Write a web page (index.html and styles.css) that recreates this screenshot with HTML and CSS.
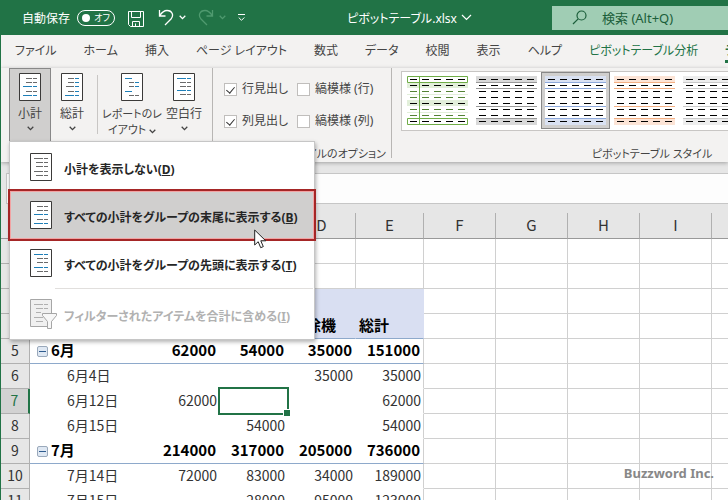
FILE: index.html
```html
<!DOCTYPE html>
<html lang="ja">
<head>
    <meta charset="UTF-8">
    <meta name="viewport" content="width=device-width, initial-scale=1.0">
    <title>ピボットテーブル.xlsx</title>
    <link rel="stylesheet" href="styles.css">
</head>
<body>

<!-- shared icons -->
<svg class="defs" width="0" height="0" aria-hidden="true">
    <symbol id="caret" viewBox="0 0 7 5"><path d="M.7.8 3.5 3.6 6.3.8" fill="none" stroke="currentColor" stroke-width="1.3"/></symbol>
    <symbol id="page" viewBox="0 0 22 28"><path d="M.5.5h21v27H.5z" fill="#fff" stroke="#3b3a39"/></symbol>
    <symbol id="dashes" viewBox="0 0 61 49">
        <path d="M3 3.5h58M3 9.5h58M3 15.5h58M3 21.5h58M3 27.5h58M3 33.5h58M3 39.5h58M3 45.5h58" fill="none" stroke="currentColor" stroke-dasharray="7 5"/>
    </symbol>
    <symbol id="subtotal-bottom" viewBox="0 0 22 28">
        <use href="#page"/>
        <path d="M7 5.5h6M14 5.5h4M7 9.5h6M14 9.5h4M7 18.5h6M14 18.5h4" stroke="#6a6a6a"/>
        <path d="M4 13.5h9M14 13.5h4M4 22.5h9M14 22.5h4" stroke="#1e7fb8"/>
    </symbol>
</svg>

<div class="window">
    <header class="titlebar">
        <div class="quick-access">
            <label for="autosave">自動保存</label>
            <span class="switch">
                <input type="checkbox" id="autosave" role="switch">
                <span class="switch-text">オフ</span>
            </span>
            <button class="icon-button save" aria-label="上書き保存">
                <svg width="16" height="16" viewBox="0 0 16 16" fill="none" stroke="currentColor"><path d="M.5.5h15v15H2.5l-2-2zM3.5.5v6h9v-6M4.5 15.5v-5h7v5M7.5 15.5v-3"/></svg>
            </button>
            <button class="icon-button" aria-label="元に戻す">
                <svg width="16" height="17" viewBox="0 0 16 17" fill="none" stroke="currentColor" stroke-width="1.3"><path d="M1.5 1v6h6M1.8 6.7C4 3 6 1.5 9 1.5c5.500 0 7 5 4 8.500L7 16"/></svg>
                <svg class="caret" width="7" height="5"><use href="#caret"/></svg>
            </button>
            <button class="icon-button dim" aria-label="やり直し">
                <svg width="16" height="17" viewBox="0 0 16 17" fill="none" stroke="currentColor" stroke-width="1.3"><path d="M14.500 1v6h-6M14.200 6.700C12 3 10 1.500 7 1.500c-5.500 0-7 5-4 8.500L9 16"/></svg>
                <svg class="caret" width="7" height="5"><use href="#caret"/></svg>
            </button>
            <button class="icon-button" aria-label="クイック アクセス ツール バーのカスタマイズ">
                <svg width="7" height="8" viewBox="0 0 7 8" fill="none" stroke="currentColor"><path d="M0 .5h7M.7 3.500 3.500 6.300 6.300 3.500"/></svg>
            </button>
        </div>
        <button class="file-name">ピボットテーブル.xlsx
            <svg width="11" height="7" viewBox="0 0 11 7" fill="none" stroke="currentColor" stroke-width="1.200"><path d="M1 1l4.500 4.500L10 1"/></svg>
        </button>
        <div class="search">
            <svg width="15" height="15" viewBox="0 0 15 15" fill="none" stroke="currentColor" stroke-width="1.200"><circle cx="9.500" cy="5.500" r="4.500"/><path d="M6.200 8.800 1 14"/></svg>
            <input type="text" aria-label="検索" placeholder="検索 (Alt+Q)">
        </div>
    </header>

    <nav class="tabs">
        <a href="#">ファイル</a>
        <a href="#">ホーム</a>
        <a href="#">挿入</a>
        <a href="#">ページ レイアウト</a>
        <a href="#">数式</a>
        <a href="#">データ</a>
        <a href="#">校閲</a>
        <a href="#">表示</a>
        <a href="#">ヘルプ</a>
        <a href="#" class="context">ピボットテーブル分析</a>
        <a href="#" class="context active">デザイン</a>
    </nav>

    <section class="ribbon">
        <div class="group layout">
            <button class="tool pressed">
                <svg width="22" height="28"><use href="#subtotal-bottom"/></svg>
                <span>小計</span>
                <svg class="caret" width="7" height="5"><use href="#caret"/></svg>
            </button>
            <button class="tool">
                <svg width="22" height="28" viewBox="0 0 22 28">
                    <use href="#page"/>
                    <path d="M7 5.500h6M7 9.500h6M5 13.500h8M7 18.500h6" stroke="#6a6a6a"/>
                    <path d="M14 5.500h4M14 9.500h4M14 13.500h4M14 18.500h4M4 22.500h9M14 22.500h4" stroke="#1e7fb8"/>
                </svg>
                <span>総計</span>
                <svg class="caret" width="7" height="5"><use href="#caret"/></svg>
            </button>
            <div class="divider"></div>
            <button class="tool wide">
                <svg width="22" height="28" viewBox="0 0 22 28">
                    <use href="#page"/>
                    <path d="M8 9.500h5M8 13.500h5M8 22.500h5M14 22.500h4" stroke="#6a6a6a"/>
                    <path d="M4 5.500h7M14 9.500h4M14 13.500h4M4 18.500h7" stroke="#1e7fb8"/>
                </svg>
                <span>レポートのレ<br>イアウト <svg width="7" height="5"><use href="#caret"/></svg></span>
            </button>
            <button class="tool">
                <svg width="22" height="28" viewBox="0 0 22 28">
                    <use href="#page"/>
                    <path d="M7 9.500h6M14 9.500h4M7 13.500h6M14 13.500h4M7 21.500h6M14 21.500h4" stroke="#6a6a6a"/>
                    <path d="M4 5.500h9M14 5.500h4M4 17.500h9M14 17.500h4" stroke="#1e7fb8"/>
                </svg>
                <span>空白行</span>
                <svg class="caret" width="7" height="5"><use href="#caret"/></svg>
            </button>
        </div>

        <div class="group options">
            <div class="checks">
                <label><input type="checkbox" checked>行見出し</label>
                <label><input type="checkbox">縞模様 (行)</label>
                <label><input type="checkbox" checked>列見出し</label>
                <label><input type="checkbox">縞模様 (列)</label>
            </div>
            <p class="group-name">ピボットテーブル スタイルのオプション</p>
        </div>

        <div class="group styles">
            <div class="gallery">
                <button class="style" aria-label="緑のスタイル">
                    <svg width="61" height="49" viewBox="0 0 61 49">
                        <path fill="#e2efda" d="M0 7h61v5H0zM0 24h61v6H0z"/>
                        <path stroke="#e2efda" d="M0 18.500h61M0 36.500h61"/>
                        <use href="#dashes" color="#000"/>
                        <path stroke="#548235" stroke-dasharray="7 5" d="M3 15.500h58M3 21.500h58M3 33.500h58M3 39.500h58"/>
                        <path fill="none" stroke="#70ad47" d="M.5.5h60v6H.5zM.5 42.500h60v6H.5zM12.500 0v49"/>
                    </svg>
                </button>
                <button class="style" aria-label="灰色のスタイル">
                    <svg width="61" height="49" viewBox="0 0 61 49">
                        <path fill="#d9d9d9" d="M0 0h61v6H0zM0 43h61v6H0z"/>
                        <path stroke="#999" d="M0 6.500h61M0 12.500h61M0 30.500h61M0 42.500h61"/>
                        <use href="#dashes"/>
                    </svg>
                </button>
                <button class="style selected" aria-label="青のスタイル">
                    <svg width="61" height="49" viewBox="0 0 61 49">
                        <path fill="#fff" d="M0 0h61v49H0z"/>
                        <path fill="#d9e1f2" d="M0 0h61v6H0zM0 43h61v6H0z"/>
                        <path stroke="#8ea9db" d="M0 6.500h61M0 12.500h61M0 30.500h61M0 42.500h61"/>
                        <use href="#dashes"/>
                    </svg>
                </button>
                <button class="style" aria-label="オレンジのスタイル">
                    <svg width="61" height="49" viewBox="0 0 61 49">
                        <path fill="#fce4d6" d="M0 0h61v6H0zM0 43h61v6H0z"/>
                        <path stroke="#f4b084" d="M0 6.500h61M0 12.500h61M0 30.500h61M0 42.500h61"/>
                        <use href="#dashes"/>
                    </svg>
                </button>
                <button class="style" aria-label="薄い灰色のスタイル">
                    <svg width="61" height="49" viewBox="0 0 61 49">
                        <path fill="#ededed" d="M0 0h61v6H0zM0 43h61v6H0z"/>
                        <path stroke="#c9c9c9" d="M0 6.500h61M0 12.500h61M0 30.500h61M0 42.500h61"/>
                        <use href="#dashes"/>
                    </svg>
                </button>
            </div>
            <p class="group-name">ピボットテーブル スタイル</p>
        </div>
    </section>

    <div class="formula-bar">
        <input type="text" aria-label="数式バー">
    </div>

    <main class="sheet">
        <table>
            <colgroup>
                <col class="col-head"><col class="col-a">
                <col class="col-pivot"><col class="col-pivot"><col class="col-pivot"><col class="col-pivot">
                <col><col><col><col><col>
            </colgroup>
            <thead>
                <tr><th></th><th></th><th></th><th></th><th>D</th><th>E</th><th>F</th><th>G</th><th>H</th><th>I</th><th></th></tr>
            </thead>
            <tbody>
                <tr><th></th><td></td><td></td><td></td><td></td><td></td><td></td><td></td><td></td><td></td><td></td></tr>
                <tr><th></th><td></td><td></td><td></td><td></td><td></td><td></td><td></td><td></td><td></td><td></td></tr>
                <tr class="fields"><th></th><td></td><td></td><td></td><td></td><td></td><td></td><td></td><td></td><td></td><td></td></tr>
                <tr class="fields last"><th></th><td></td><td></td><td></td><td>掃除機</td><td>総計</td><td></td><td></td><td></td><td></td><td></td></tr>
                <tr class="pivot month"><th>5</th><td><button class="collapse" aria-label="折りたたむ"></button>6月</td><td>62000</td><td>54000</td><td>35000</td><td>151000</td><td></td><td></td><td></td><td></td><td></td></tr>
                <tr class="pivot"><th>6</th><td>6月4日</td><td></td><td></td><td>35000</td><td>35000</td><td></td><td></td><td></td><td></td><td></td></tr>
                <tr class="pivot current"><th>7</th><td>6月12日</td><td>62000</td><td class="active-cell"></td><td></td><td>62000</td><td></td><td></td><td></td><td></td><td></td></tr>
                <tr class="pivot"><th>8</th><td>6月15日</td><td></td><td>54000</td><td></td><td>54000</td><td></td><td></td><td></td><td></td><td></td></tr>
                <tr class="pivot month"><th>9</th><td><button class="collapse" aria-label="折りたたむ"></button>7月</td><td>214000</td><td>317000</td><td>205000</td><td>736000</td><td></td><td></td><td></td><td></td><td></td></tr>
                <tr class="pivot"><th>10</th><td>7月14日</td><td>72000</td><td>83000</td><td>34000</td><td>189000</td><td></td><td></td><td></td><td></td><td></td></tr>
                <tr class="pivot"><th>11</th><td>7月15日</td><td></td><td>28000</td><td>95000</td><td>123000</td><td></td><td></td><td></td><td></td><td></td></tr>
            </tbody>
        </table>
        <p class="credit">Buzzword Inc.</p>
    </main>

    <div class="menu" role="menu">
        <button class="menu-item" role="menuitem">
            <svg width="22" height="28" viewBox="0 0 22 28">
                <use href="#page"/>
                <path d="M4 5.500h9M14 5.500h4M6 9.500h7M14 9.500h4M6 13.500h7M14 13.500h4M4 18.500h9M14 18.500h4M6 22.500h7M14 22.500h4" stroke="#6a6a6a"/>
            </svg>
            <span>小計を表示しない(<u>D</u>)</span>
        </button>
        <button class="menu-item highlighted" role="menuitem">
            <svg width="22" height="28"><use href="#subtotal-bottom"/></svg>
            <span>すべての小計をグループの末尾に表示する(<u>B</u>)</span>
        </button>
        <button class="menu-item" role="menuitem">
            <svg width="22" height="28" viewBox="0 0 22 28">
                <use href="#page"/>
                <path d="M7 9.500h6M14 9.500h4M7 13.500h6M14 13.500h4M7 22.500h6M14 22.500h4" stroke="#6a6a6a"/>
                <path d="M4 5.500h9M14 5.500h4M4 18.500h9M14 18.500h4" stroke="#1e7fb8"/>
            </svg>
            <span>すべての小計をグループの先頭に表示する(<u>T</u>)</span>
        </button>
        <hr>
        <button class="menu-item" role="menuitem" disabled>
            <svg width="28" height="30" viewBox="0 0 28 30">
                <path d="M.5.5h21v27H.5z" fill="#f0f0f0" stroke="#a6a6a6"/>
                <path d="M4 5.500h9M14 5.500h4M6 9.500h7M14 9.500h4M6 13.500h5M4 18.500h9M6 22.500h7" stroke="#b0b0b0"/>
                <path d="M12.500 14.500h14v2l-5 6v7h-4v-7l-5-6z" fill="#f7f7f7" stroke="#a6a6a6"/>
            </svg>
            <span>フィルターされたアイテムを合計に含める(<u>I</u>)</span>
        </button>
    </div>

    <svg class="pointer" width="13" height="20" viewBox="0 0 13 20"><path d="M.7 1v15l3.500-3.300 2.500 6 2.600-1.100-2.500-5.800h4.900z" fill="#fff" stroke="#222"/></svg>
</div>

</body>
</html>
```
FILE: styles.css
```css
* {
    box-sizing: border-box;
}

body {
    margin: 0;
    height: 100vh;
    overflow: hidden;
    font-family: "Noto Sans", "Noto Sans CJK JP", sans-serif;
    font-size: 12px;
    color: #444;
    background-color: #e6e6e6;
}

button,
input {
    font: inherit;
    color: inherit;
    margin: 0;
    padding: 0;
    border: none;
    background: none;
}

p {
    margin: 0;
}

svg {
    flex: none;
}

.defs {
    position: absolute;
}

.window {
    position: relative;
    height: 100%;
    display: flex;
    flex-direction: column;
    border-left: 1px solid #217346;
    overflow: hidden;
    font-feature-settings: "palt";
}

/* title bar */
.titlebar {
    flex: none;
    display: grid;
    grid-template-columns: 346px 1fr 176px;
    align-items: center;
    height: 35px;
    background-color: #217346;
    color: #fff;
}

.quick-access {
    display: flex;
    align-items: center;
    padding-left: 21px;
}

.switch {
    display: flex;
    align-items: center;
    width: 38px;
    height: 16px;
    margin-left: 7px;
    padding-left: 4px;
    border: 1px solid #fff;
    border-radius: 8px;
}

.switch input {
    appearance: none;
    width: 8px;
    height: 8px;
    border-radius: 50%;
    background-color: #fff;
}

.switch-text {
    flex: 1;
    text-align: center;
    font-size: 9px;
}

.icon-button {
    display: flex;
    align-items: center;
    gap: 5px;
    margin-right: 12px;
}

.icon-button.save {
    margin: 2px 14px 0 13px;
}

.icon-button.dim {
    color: #4f9a6f;
}

.file-name {
    display: flex;
    align-items: center;
    gap: 4px;
    font-size: 12px;
    white-space: nowrap;
}

.search {
    display: flex;
    align-items: center;
    gap: 15px;
    height: 24px;
    padding-left: 20px;
    background-color: #a0cdb4;
    color: #1b5e3a;
}

.search input {
    width: 100%;
    font-size: 13px;
    outline: none;
}

.search input::placeholder {
    color: #1b5e3a;
    opacity: 1;
}

/* tabs */
.tabs {
    flex: none;
    display: flex;
    gap: 27px;
    height: 33px;
    padding: 4px 0 0 14px;
    background-color: #f3f2f1;
    font-size: 12px;
    line-height: 24px;
    white-space: nowrap;
}

.tabs a {
    flex: none;
    height: 24px;
    color: #444;
    text-decoration: none;
}

.tabs .context {
    color: #217346;
}

.tabs .active {
    border-bottom: 3px solid #217346;
    font-weight: bold;
}

/* ribbon */
.ribbon {
    flex: none;
    display: flex;
    height: 94px;
    padding-left: 8px;
    background-color: #f3f2f1;
    box-shadow: 0 1px 4px rgba(0, 0, 0, 0.3);
}

.group {
    flex: none;
    display: flex;
    background: linear-gradient(#b8b6b4, #b8b6b4) right top / 1px 90px no-repeat;
}

.group-name {
    font-size: 11px;
    line-height: 16px;
    white-space: nowrap;
}

.layout {
    width: 204px;
}

.tool {
    display: flex;
    flex-direction: column;
    align-items: center;
    width: 42px;
    height: 74px;
    padding-top: 4px;
    border: 1px solid transparent;
    line-height: 16px;
    white-space: nowrap;
}

.tool span {
    margin-top: 5px;
}

.tool .caret {
    margin-top: 4px;
}

.tool.wide {
    width: 62px;
    font-size: 11px;
}

.tool.wide svg {
    vertical-align: middle;
}

.tool.pressed {
    background-color: #d0cfce;
    border-color: #888;
}

.divider {
    width: 1px;
    height: 59px;
    margin: 7px 3px 0 4px;
    background-color: #c8c6c4;
}

.options {
    flex-direction: column;
    justify-content: space-between;
    align-items: flex-end;
    width: 179px;
    padding: 12px 6px 0 11px;
}

.checks {
    display: grid;
    align-self: flex-start;
    grid-template-columns: 73px 82px;
    row-gap: 14px;
}

.checks label {
    display: flex;
    align-items: center;
    gap: 5px;
    line-height: 18px;
    white-space: nowrap;
}

.checks input {
    appearance: none;
    display: flex;
    justify-content: center;
    width: 13px;
    height: 13px;
    border: 1px solid #c0bebc;
    background-color: #fff;
}

.checks input:checked::before {
    content: "";
    width: 4px;
    height: 7px;
    margin-top: 1px;
    border: solid #333;
    border-width: 0 1px 1px 0;
    transform: rotate(40deg);
}

.styles {
    flex-direction: column;
    justify-content: space-between;
    align-items: center;
    width: 520px;
    padding-top: 3px;
}

.gallery {
    display: flex;
    width: 502px;
    height: 60px;
    padding-left: 1px;
    border: 1px solid #c8c6c4;
    background-color: #fff;
}

.style {
    display: flex;
    justify-content: center;
    align-items: center;
    width: 69px;
    height: 57px;
    color: #000;
    border: 1px solid transparent;
}

.style.selected {
    background-color: #d0cfce;
    border-color: #888;
}

/* formula bar */
.formula-bar {
    flex: none;
    padding: 11px 0 9px 5px;
}

.formula-bar input {
    display: block;
    width: 100%;
    height: 31px;
    border: 1px solid #c6c6c6;
    border-right: none;
    background-color: #fdfdfd;
}

/* sheet */
.sheet {
    flex: 1;
    position: relative;
    overflow: hidden;
    background-color: #fff;
    font-family: "Noto Sans CJK JP", sans-serif;
    font-feature-settings: normal;
}

table {
    table-layout: fixed;
    width: 783px;
    border-collapse: separate;
    border-spacing: 0;
    font-size: 14px;
    line-height: 20px;
    color: #333;
}

.col-head {
    width: 29px;
}

.col-a {
    width: 122px;
}

.col-pivot {
    width: 68px;
}

th,
td {
    height: 25px;
    padding: 0 0 2px;
    border-right: 1px solid #d0d0d0;
    border-bottom: 1px solid #d0d0d0;
    white-space: nowrap;
}

th {
    background-color: #e6e6e6;
    border-color: #b0b0b0;
    font-weight: normal;
    text-align: center;
}

thead th {
    height: 26px;
    border-bottom-color: #999;
    font-size: 15px;
}

.fields td:nth-child(-n+6) {
    padding-left: 3px;
    background-color: #d9dff2;
    border-color: #d9dff2;
    font-size: 15px;
    font-weight: bold;
    color: #000;
}

.fields.last td:nth-child(-n+6) {
    border-bottom-color: #8ea9cb;
}

.pivot td:nth-child(-n+5) {
    border-right-color: transparent;
}

.pivot td:nth-child(-n+6) {
    border-bottom-color: transparent;
    padding-right: 2px;
    text-align: right;
}

.pivot td:nth-child(2) {
    padding-left: 37px;
    text-align: left;
}

.month td {
    font-size: 15px;
    font-weight: bold;
    color: #000;
}

.pivot.month td:nth-child(-n+6) {
    padding-right: 3px;
    border-bottom-color: #8ea9cb;
}

.pivot.month td:nth-child(-n+5) {
    border-right: none;
    padding-right: 4px;
}

.pivot.month td:nth-child(2) {
    padding-left: 7px;
}

.collapse {
    width: 11px;
    height: 11px;
    margin-right: 3px;
    border: 1px solid #9aa9bb;
    border-radius: 2px;
    background: linear-gradient(#2f5c8f, #2f5c8f) center / 7px 1px no-repeat, #dfe8f3;
}

.current th {
    background-color: #d2d2d2;
    border-right: 2px solid #217346;
    color: #217346;
}

.active-cell {
    position: relative;
}

.active-cell::before {
    content: "";
    position: absolute;
    inset: -2px;
    border: 2px solid #217346;
}

.active-cell::after {
    content: "";
    position: absolute;
    right: -3px;
    bottom: -3px;
    width: 6px;
    height: 6px;
    border: solid #fff;
    border-width: 1px 0 0 1px;
    background-color: #217346;
}

.credit {
    position: absolute;
    right: 14px;
    bottom: 17px;
    font-family: "Noto Sans", sans-serif;
    font-size: 13px;
    font-weight: bold;
    line-height: 20px;
    color: #888;
}

/* drop-down menu */
.menu {
    position: absolute;
    top: 141px;
    left: 8px;
    width: 306px;
    padding: 1px 0;
    border: 1px solid #c6c6c6;
    background-color: #fff;
    box-shadow: 1px 2px 4px rgba(0, 0, 0, 0.3);
}

.menu-item {
    display: grid;
    grid-template-columns: 34px 1fr;
    align-items: center;
    width: 100%;
    height: 48px;
    padding-left: 20px;
    font-weight: bold;
    text-align: left;
    white-space: nowrap;
    color: #262626;
}

.menu-item span {
    padding-top: 3px;
}

.menu-item.highlighted {
    position: relative;
    background-color: #d0cfce;
    outline: 2px solid #a52626;
    box-shadow: inset 0 0 0 1px #f2a3a3;
}

.menu-item:disabled {
    color: #b1b1b1;
}

.menu hr {
    margin: 1px 1px 1px 45px;
    border: none;
    border-top: 1px solid #e1dfdd;
}

.pointer {
    position: absolute;
    top: 229px;
    left: 253px;
}
```
